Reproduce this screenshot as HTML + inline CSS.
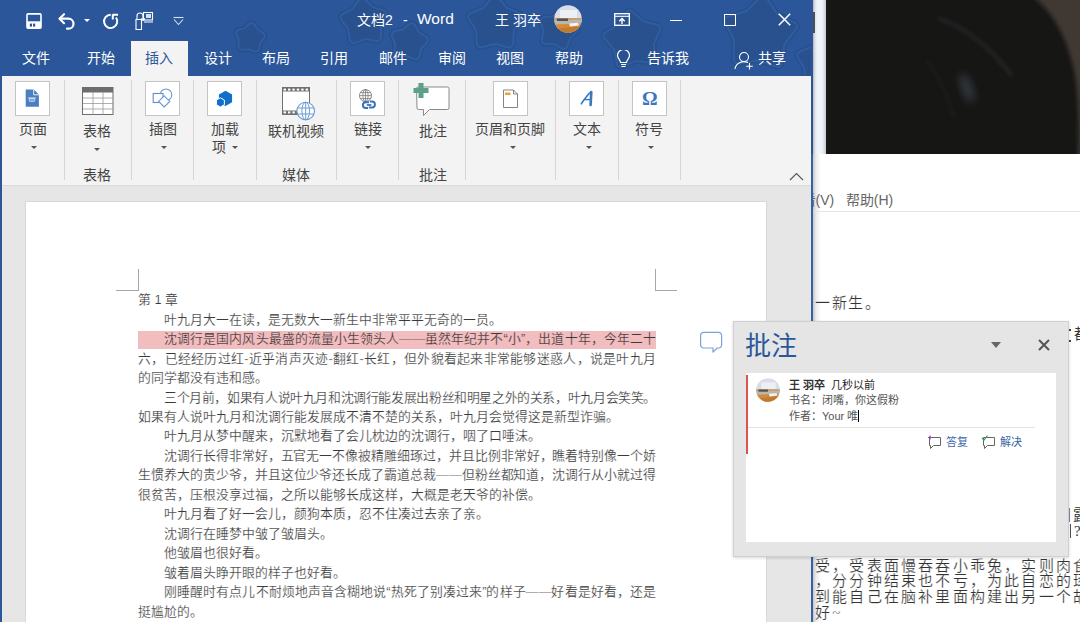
<!DOCTYPE html>
<html lang="zh-CN"><head><meta charset="utf-8">
<style>
*{margin:0;padding:0;box-sizing:border-box}
html,body{width:1080px;height:622px;overflow:hidden;background:#fff;font-family:"Liberation Sans",sans-serif}
.a{position:absolute}
#title{left:0;top:0;width:812px;height:76px;background:#2b579a}
.tt{color:#fff;font-size:14px;line-height:18px;white-space:nowrap}
.tab{color:#fff;font-size:14px;line-height:18px;white-space:nowrap;top:49px}
#ribbon{left:2px;top:76px;width:809px;height:110px;background:#f3f3f3;border-bottom:1px solid #dadada}
.sep{width:1px;background:#d6d6d6;top:80px;height:100px}
.box{width:35px;height:35px;background:#fff;border:1px solid #c4c4c4;top:81px}
.lbl{color:#444;font-size:14px;line-height:16px;white-space:nowrap;text-align:center}
.dd{width:0;height:0;border-left:3px solid transparent;border-right:3px solid transparent;border-top:3px solid #555}
#docbg{left:2px;top:186px;width:809px;height:437px;background:#e6e6e6}
#page{left:26px;top:202px;width:740px;height:430px;background:#fff;box-shadow:0 0 0 1px #d8d8d8}
.ln{position:absolute;left:138px;width:518px;font-size:12.85px;line-height:19.5px;height:19.5px;color:#3a3a3a;white-space:nowrap}
.j{text-align:justify;text-align-last:justify}
.ln{-webkit-text-stroke:0.18px #fff}
.ind{padding-left:26px}
</style></head><body>
<!-- title bar -->
<div id="title" class="a"></div>
<svg class="a" style="left:0;top:0" width="812" height="76" viewBox="0 0 812 76">
 <g fill="#284f8c" stroke="#284f8c" stroke-width="13" stroke-linejoin="round"><path d="M251.5 27.1 L255.0 32.8 L260.8 36.1 L256.5 41.2 L255.2 47.7 L249.0 45.2 L242.4 45.9 L242.9 39.3 L240.1 33.2 L246.6 31.6Z"/><path d="M362.3 2.1 L370.8 10.7 L382.4 14.2 L376.9 25.0 L377.1 37.1 L365.2 35.1 L353.7 39.1 L351.8 27.2 L344.5 17.5 L355.3 12.0Z"/><path d="M411.6 27.2 L416.1 35.1 L423.9 39.9 L417.7 46.6 L415.6 55.5 L407.3 51.7 L398.2 52.4 L399.2 43.4 L395.8 35.0 L404.7 33.1Z"/><path d="M495.0 0.0 L504.3 11.2 L517.8 16.6 L510.1 28.9 L509.1 43.4 L495.0 39.8 L480.9 43.4 L479.9 28.9 L472.2 16.6 L485.7 11.2Z"/><path d="M562.1 14.5 L566.2 23.4 L574.0 29.2 L566.9 35.8 L563.7 44.9 L555.3 40.2 L545.6 40.1 L547.5 30.6 L544.6 21.3 L554.2 20.1Z"/><path d="M629.4 14.3 L641.1 24.8 L656.4 28.6 L649.9 43.0 L651.1 58.7 L635.4 57.0 L620.8 63.0 L617.6 47.5 L607.4 35.5 L621.1 27.7Z"/><path d="M763.0 0.1 L774.7 17.1 L793.1 26.4 L780.7 42.8 L777.5 63.1 L758.0 56.4 L737.7 59.7 L738.1 39.0 L728.7 20.7 L748.4 14.8Z"/><path d="M822.0 40.0 L830.5 50.3 L842.9 55.2 L835.8 66.5 L834.9 79.8 L822.0 76.5 L809.1 79.8 L808.2 66.5 L801.1 55.2 L813.5 50.3Z"/></g>
 <g fill="#2f5da2" stroke="#2f5da2" stroke-width="10" stroke-linejoin="round"><path d="M251.5 27.1 L255.0 32.8 L260.8 36.1 L256.5 41.2 L255.2 47.7 L249.0 45.2 L242.4 45.9 L242.9 39.3 L240.1 33.2 L246.6 31.6Z"/><path d="M362.3 2.1 L370.8 10.7 L382.4 14.2 L376.9 25.0 L377.1 37.1 L365.2 35.1 L353.7 39.1 L351.8 27.2 L344.5 17.5 L355.3 12.0Z"/><path d="M411.6 27.2 L416.1 35.1 L423.9 39.9 L417.7 46.6 L415.6 55.5 L407.3 51.7 L398.2 52.4 L399.2 43.4 L395.8 35.0 L404.7 33.1Z"/><path d="M495.0 0.0 L504.3 11.2 L517.8 16.6 L510.1 28.9 L509.1 43.4 L495.0 39.8 L480.9 43.4 L479.9 28.9 L472.2 16.6 L485.7 11.2Z"/><path d="M562.1 14.5 L566.2 23.4 L574.0 29.2 L566.9 35.8 L563.7 44.9 L555.3 40.2 L545.6 40.1 L547.5 30.6 L544.6 21.3 L554.2 20.1Z"/><path d="M629.4 14.3 L641.1 24.8 L656.4 28.6 L649.9 43.0 L651.1 58.7 L635.4 57.0 L620.8 63.0 L617.6 47.5 L607.4 35.5 L621.1 27.7Z"/><path d="M763.0 0.1 L774.7 17.1 L793.1 26.4 L780.7 42.8 L777.5 63.1 L758.0 56.4 L737.7 59.7 L738.1 39.0 L728.7 20.7 L748.4 14.8Z"/><path d="M822.0 40.0 L830.5 50.3 L842.9 55.2 L835.8 66.5 L834.9 79.8 L822.0 76.5 L809.1 79.8 L808.2 66.5 L801.1 55.2 L813.5 50.3Z"/></g>
 <g fill="#29518e" stroke="#29518e" stroke-width="6" stroke-linejoin="round"><path d="M251.5 27.1 L255.0 32.8 L260.8 36.1 L256.5 41.2 L255.2 47.7 L249.0 45.2 L242.4 45.9 L242.9 39.3 L240.1 33.2 L246.6 31.6Z"/><path d="M362.3 2.1 L370.8 10.7 L382.4 14.2 L376.9 25.0 L377.1 37.1 L365.2 35.1 L353.7 39.1 L351.8 27.2 L344.5 17.5 L355.3 12.0Z"/><path d="M411.6 27.2 L416.1 35.1 L423.9 39.9 L417.7 46.6 L415.6 55.5 L407.3 51.7 L398.2 52.4 L399.2 43.4 L395.8 35.0 L404.7 33.1Z"/><path d="M495.0 0.0 L504.3 11.2 L517.8 16.6 L510.1 28.9 L509.1 43.4 L495.0 39.8 L480.9 43.4 L479.9 28.9 L472.2 16.6 L485.7 11.2Z"/><path d="M562.1 14.5 L566.2 23.4 L574.0 29.2 L566.9 35.8 L563.7 44.9 L555.3 40.2 L545.6 40.1 L547.5 30.6 L544.6 21.3 L554.2 20.1Z"/><path d="M629.4 14.3 L641.1 24.8 L656.4 28.6 L649.9 43.0 L651.1 58.7 L635.4 57.0 L620.8 63.0 L617.6 47.5 L607.4 35.5 L621.1 27.7Z"/><path d="M763.0 0.1 L774.7 17.1 L793.1 26.4 L780.7 42.8 L777.5 63.1 L758.0 56.4 L737.7 59.7 L738.1 39.0 L728.7 20.7 L748.4 14.8Z"/><path d="M822.0 40.0 L830.5 50.3 L842.9 55.2 L835.8 66.5 L834.9 79.8 L822.0 76.5 L809.1 79.8 L808.2 66.5 L801.1 55.2 L813.5 50.3Z"/></g>
</svg>
<div class="a" style="left:0;top:0;width:2px;height:622px;background:#2b579a"></div>
<div class="a" style="left:811px;top:0;width:2px;height:622px;background:#2b579a"></div>
<div class="a tt" style="left:357px;top:11px">文档2</div><div class="a tt" style="left:403px;top:11px">-</div><div class="a tt" style="left:417px;top:10px;font-size:15.5px">Word</div>
<div class="a tt" style="left:495px;top:11px">王 羽卒</div>
<svg class="a" style="left:554px;top:5px" width="28" height="28" viewBox="0 0 28 28">
 <defs><clipPath id="av"><circle cx="14" cy="14" r="13.8"/></clipPath></defs>
 <g clip-path="url(#av)">
  <rect width="28" height="28" fill="#d9dee6"/>
  <rect x="6" y="5" width="17" height="8" fill="#eceff3"/>
  <rect x="0" y="13" width="28" height="3" fill="#c99a6a"/>
  <path d="M0 15.5L28 14.5V20H0z" fill="#b9b6b2"/>
  <rect x="3" y="13.5" width="11" height="2.5" fill="#55524f"/>
  <path d="M0 19.5L28 18.5V28H0z" fill="#d48b38"/>
  <path d="M0 24L28 21V28H0z" fill="#c27a32"/>
  <path d="M15 18.5L24 17.8L25 20.5L16 21.5z" fill="#f4f4f4"/>
 </g>
</svg>


<!-- QAT -->
<svg class="a" style="left:25px;top:12px" width="18" height="18" viewBox="0 0 18 18">
 <rect x="2" y="1.9" width="14" height="14.3" rx="1" fill="none" stroke="#fff" stroke-width="1.6"/>
 <rect x="2" y="9.3" width="14" height="6.9" fill="#fff"/>
 <rect x="4.8" y="11.6" width="2.2" height="3" fill="#2b579a"/>
 <rect x="8" y="11.6" width="2.2" height="3" fill="#2b579a"/>
</svg>
<svg class="a" style="left:57px;top:12px" width="20" height="18" viewBox="0 0 20 18">
 <path d="M3 6.7h8.5a5 5 0 0 1 0 10h-1.5" fill="none" stroke="#fff" stroke-width="2.2" stroke-linecap="round"/>
 <path d="M7 2.2L2.5 6.7 7 11.2" fill="none" stroke="#fff" stroke-width="2.2" stroke-linecap="round" stroke-linejoin="round"/>
</svg>
<div class="a" style="left:84px;top:19px;width:0;height:0;border-left:3px solid transparent;border-right:3px solid transparent;border-top:3px solid #fff"></div>
<svg class="a" style="left:102px;top:12px" width="18" height="18" viewBox="0 0 18 18">
 <path d="M8.7 2.8A6.6 6.6 0 1 0 14 5.5" fill="none" stroke="#fff" stroke-width="2"/>
 <path d="M10.5 2.7h5.5M10.8 2.5v5" fill="none" stroke="#fff" stroke-width="2"/>
</svg>
<svg class="a" style="left:134px;top:11px" width="20" height="20" viewBox="0 0 20 20">
 <path d="M2 18.5V8.5h5.5v10z" fill="none" stroke="#fff" stroke-width="1.1"/>
 <path d="M3 8V5a3 3 0 0 1 6 0" fill="none" stroke="#fff" stroke-width="1.1"/>
 <path d="M9 9.5l-2-2M9 9.5l2-2M9 9.5V5" fill="none" stroke="#fff" stroke-width="1.2"/>
 <rect x="9.5" y="1.5" width="9" height="7.5" fill="none" stroke="#fff" stroke-width="1.1"/>
 <rect x="12" y="3" width="5" height="4" fill="#d8e2f0"/>
 <path d="M10 11h9" stroke="#fff" stroke-width="1"/>
</svg>
<svg class="a" style="left:173px;top:16px" width="11" height="10" viewBox="0 0 11 10"><path d="M0.5 1.5h10" stroke="#d5dfee" stroke-width="1.1"/><path d="M1 3.5l4.5 5 4.5-5" fill="none" stroke="#d5dfee" stroke-width="1.1"/></svg>

<!-- window controls -->
<svg class="a" style="left:614px;top:13px" width="16" height="13" viewBox="0 0 16 13">
 <rect x="0.7" y="0.7" width="14.6" height="11.6" fill="none" stroke="#fff" stroke-width="1.3"/>
 <path d="M0.7 3.3h14.6" stroke="#fff" stroke-width="1.1"/>
 <path d="M8 11V5.5M5.3 8.2L8 5.5l2.7 2.7" fill="none" stroke="#fff" stroke-width="1.4"/>
</svg>
<div class="a" style="left:670px;top:19.5px;width:12px;height:1.4px;background:#fff"></div>
<div class="a" style="left:724px;top:14px;width:12px;height:12px;border:1.2px solid #fff"></div>
<svg class="a" style="left:778px;top:13px" width="13" height="13" viewBox="0 0 13 13"><path d="M0.8 0.8l11.4 11.4M12.2 0.8L0.8 12.2" stroke="#fff" stroke-width="1.5"/></svg>
<svg class="a" style="left:616px;top:50px" width="15" height="18" viewBox="0 0 15 18">
 <path d="M4.5 12.5c0-2.5-3-4-3-7a6 6 0 0 1 12 0c0 3-3 4.5-3 7z" fill="none" stroke="#fff" stroke-width="1.2"/>
 <path d="M5 14.5h5M5.5 16.5h4" stroke="#fff" stroke-width="1.1"/>
</svg>
<svg class="a" style="left:734px;top:51px" width="20" height="19" viewBox="0 0 20 19">
 <circle cx="10" cy="6" r="4.5" fill="none" stroke="#fff" stroke-width="1.1"/>
 <path d="M1 18a9 8 0 0 1 13-6.5" fill="none" stroke="#fff" stroke-width="1.1"/>
 <path d="M15.5 12v6.5M12.2 15.2h6.6" stroke="#fff" stroke-width="1.1"/>
</svg>

<!-- tabs -->
<div class="a" style="left:131px;top:41px;width:57px;height:36px;background:#f3f3f3"></div>
<div class="a tab" style="left:22px">文件</div>
<div class="a tab" style="left:87px">开始</div>
<div class="a tab" style="left:145px;color:#2b579a">插入</div>
<div class="a tab" style="left:204px">设计</div>
<div class="a tab" style="left:262px">布局</div>
<div class="a tab" style="left:320px">引用</div>
<div class="a tab" style="left:379px">邮件</div>
<div class="a tab" style="left:438px">审阅</div>
<div class="a tab" style="left:496px">视图</div>
<div class="a tab" style="left:555px">帮助</div>
<div class="a tab" style="left:647px">告诉我</div>
<div class="a tab" style="left:758px">共享</div>

<!-- ribbon -->
<div id="ribbon" class="a"></div>


<!-- ribbon content -->
<div class="a sep" style="left:64px"></div>
<div class="a sep" style="left:131px"></div>
<div class="a sep" style="left:193px"></div>
<div class="a sep" style="left:256px"></div>
<div class="a sep" style="left:336px"></div>
<div class="a sep" style="left:398px"></div>
<div class="a sep" style="left:465px"></div>
<div class="a sep" style="left:555px"></div>
<div class="a sep" style="left:618px"></div>
<div class="a sep" style="left:680px"></div>

<div class="a box" style="left:15px"></div>
<div class="a box" style="left:145px"></div>
<div class="a box" style="left:207px"></div>
<div class="a box" style="left:350px"></div>
<div class="a box" style="left:493px"></div>
<div class="a box" style="left:569px"></div>
<div class="a box" style="left:632px"></div>

<!-- icons -->
<svg class="a" style="left:15px;top:81px" width="35" height="35" viewBox="0 0 35 35">
 <path d="M10.7 8.6h8l5.2 5.2v12h-13.2z" fill="#4a80bf"/>
 <path d="M18.7 8.6v5.2h5.2" fill="none" stroke="#fff" stroke-width="0.9"/>
 <path d="M19.5 9.6v3.4h3.4z" fill="#4a80bf"/>
 <path d="M13.3 16.9h7.4" stroke="#dfe9f5" stroke-width="1"/>
 <path d="M14 17.6h6l-0.8 2.8h-4.4z" fill="none" stroke="#dfe9f5" stroke-width="0.8"/>
 <path d="M16 17.8v2.4M18 17.8v2.4" stroke="#dfe9f5" stroke-width="0.6"/>
</svg>
<svg class="a" style="left:82px;top:87px" width="32" height="28" viewBox="0 0 32 28">
 <rect x="0.5" y="0.5" width="30.5" height="27" fill="#fff" stroke="#6d6d6d"/>
 <rect x="0.5" y="0.5" width="30.5" height="5" fill="#6d6d6d"/>
 <path d="M11 5v22.5M21 5v22.5M1 11h30M1 16.5h30M1 22h30" stroke="#9a9a9a" stroke-width="0.8"/>
</svg>
<svg class="a" style="left:145px;top:81px" width="35" height="35" viewBox="0 0 35 35">
 <circle cx="21" cy="13.8" r="5.8" fill="none" stroke="#6d98cf" stroke-width="1.1"/>
 <rect x="8.2" y="12.5" width="9.8" height="9" fill="#fff" stroke="#5f8fca" stroke-width="1.1"/>
 <path d="M19.2 14.8l5.6 5.6-5.6 5.6-5.6-5.6z" fill="#fff" stroke="#6d98cf" stroke-width="1.1"/>
</svg>
<svg class="a" style="left:207px;top:81px" width="35" height="35" viewBox="0 0 35 35">
 <path d="M18.50 9.80 L25.08 13.60 L25.08 21.20 L18.50 25.00 L11.92 21.20 L11.92 13.60Z" fill="#1070c8"/>
 <path d="M13.40 16.80 L17.38 19.10 L17.38 23.70 L13.40 26.00 L9.42 23.70 L9.42 19.10Z" fill="#1070c8" stroke="#fff" stroke-width="1"/>
</svg>
<svg class="a" style="left:281px;top:86px" width="36" height="36" viewBox="0 0 36 36">
 <rect x="1.5" y="1.5" width="27" height="27" fill="#fff" stroke="#707070" stroke-width="1"/>
 <rect x="1.5" y="1.5" width="27" height="4" fill="#707070"/>
 <rect x="1.5" y="24.5" width="27" height="4" fill="#707070"/>
 <rect x="2.6" y="2.6" width="2.4" height="2" fill="#fff"/><rect x="7.0" y="2.6" width="2.4" height="2" fill="#fff"/><rect x="11.4" y="2.6" width="2.4" height="2" fill="#fff"/><rect x="15.8" y="2.6" width="2.4" height="2" fill="#fff"/><rect x="20.2" y="2.6" width="2.4" height="2" fill="#fff"/><rect x="24.6" y="2.6" width="2.4" height="2" fill="#fff"/><rect x="2.6" y="25.4" width="2.4" height="2" fill="#fff"/><rect x="7.0" y="25.4" width="2.4" height="2" fill="#fff"/><rect x="11.4" y="25.4" width="2.4" height="2" fill="#fff"/>
 <circle cx="24.7" cy="25" r="8.8" fill="#fff" stroke="#6b9bd3" stroke-width="1.1"/>
 <ellipse cx="24.7" cy="25" rx="3.8" ry="8.8" fill="none" stroke="#6b9bd3" stroke-width="1"/>
 <path d="M24.7 16.2v17.6M16.5 22h16.4M16.5 28h16.4" stroke="#6b9bd3" stroke-width="1"/>
</svg>
<svg class="a" style="left:350px;top:81px" width="35" height="35" viewBox="0 0 35 35">
 <circle cx="15.5" cy="14.6" r="6" fill="#fff" stroke="#7a7a7a" stroke-width="0.9"/>
 <ellipse cx="15.5" cy="14.6" rx="2.6" ry="6" fill="none" stroke="#7a7a7a" stroke-width="0.8"/>
 <path d="M9.5 14.6h12M10.3 11.6h10.4M10.3 17.6h10.4M15.5 8.6v12" stroke="#7a7a7a" stroke-width="0.8"/>
 <path d="M19 21.2h-3.2a2.9 2.9 0 0 0 0 5.8h2.2" fill="none" stroke="#3a73b8" stroke-width="2"/>
 <path d="M18.8 26.4h3.2a2.9 2.9 0 0 0 0-5.8h-2.2" fill="none" stroke="#3a73b8" stroke-width="2"/>
 <path d="M16.8 24h4.6" stroke="#3a73b8" stroke-width="1.8"/>
</svg>
<svg class="a" style="left:412px;top:82px" width="40" height="36" viewBox="0 0 40 36">
 <path d="M4.5 6.5a1.5 1.5 0 0 1 1.5-1.5h29.5a1.5 1.5 0 0 1 1.5 1.5v19.5a1.5 1.5 0 0 1-1.5 1.5h-18l-6 6v-6h-5a1.5 1.5 0 0 1-1.5-1.5z" fill="#fff" stroke="#8a8a8a" stroke-width="1"/>
 <path d="M6.5 1h5v5h5v5h-5v5h-5v-5h-5v-5h5z" fill="#5aa08a"/>
</svg>
<svg class="a" style="left:493px;top:81px" width="35" height="34" viewBox="0 0 35 34">
 <path d="M10.5 9h10l4 4v13.5h-14z" fill="#fff" stroke="#777" stroke-width="0.9"/>
 <path d="M20.5 9v4h4" fill="none" stroke="#777" stroke-width="0.9"/>
 <rect x="12" y="11.5" width="5.5" height="2.5" fill="#e8a33d"/>
</svg>
<svg class="a" style="left:569px;top:81px" width="35" height="35" viewBox="0 0 35 35">
 <path d="M22.3 11L21.6 24" stroke="#3d78bf" stroke-width="2.6" stroke-linecap="round"/>
 <path d="M22 10.8C18 14 15 19 12.3 22.8" fill="none" stroke="#3d78bf" stroke-width="1.6" stroke-linecap="round"/>
 <path d="M15.8 18.6h5.8" stroke="#3d78bf" stroke-width="1.4"/>
</svg>
<svg class="a" style="left:632px;top:81px" width="35" height="34" viewBox="0 0 35 34">
 <text x="17.8" y="24.3" text-anchor="middle" font-family="Liberation Serif" font-weight="bold" font-size="19.5" fill="#3b77c0">Ω</text>
</svg>

<!-- labels -->
<div class="a lbl" style="left:12px;top:121px;width:41px">页面</div>
<div class="a lbl" style="left:74px;top:123px;width:46px">表格</div>
<div class="a lbl" style="left:140px;top:121px;width:45px">插图</div>
<div class="a lbl" style="left:204px;top:121px;width:41px">加载</div>
<div class="a lbl" style="left:204px;top:139px;width:30px">项</div>
<div class="a lbl" style="left:262px;top:123px;width:68px">联机视频</div>
<div class="a lbl" style="left:340px;top:121px;width:55px">链接</div>
<div class="a lbl" style="left:410px;top:123px;width:45px">批注</div>
<div class="a lbl" style="left:470px;top:121px;width:80px">页眉和页脚</div>
<div class="a lbl" style="left:560px;top:121px;width:53px">文本</div>
<div class="a lbl" style="left:622px;top:121px;width:54px">符号</div>
<div class="a lbl" style="left:74px;top:167px;width:46px">表格</div>
<div class="a lbl" style="left:262px;top:167px;width:68px">媒体</div>
<div class="a lbl" style="left:410px;top:167px;width:45px">批注</div>

<div class="a dd" style="left:31px;top:146px"></div>
<div class="a dd" style="left:94px;top:148px"></div>
<div class="a dd" style="left:161px;top:146px"></div>
<div class="a dd" style="left:232px;top:146px"></div>
<div class="a dd" style="left:365px;top:146px"></div>
<div class="a dd" style="left:510px;top:146px"></div>
<div class="a dd" style="left:586px;top:146px"></div>
<div class="a dd" style="left:648px;top:146px"></div>
<svg class="a" style="left:789px;top:172px" width="15" height="9" viewBox="0 0 15 9"><path d="M1 8l6.5-6.5L14 8" fill="none" stroke="#555" stroke-width="1.1"/></svg>

<!-- document -->
<div id="docbg" class="a"></div>
<div id="page" class="a"></div>


<!-- crop marks -->
<div class="a" style="left:116px;top:290px;width:22px;height:1px;background:#a8a8a8"></div>
<div class="a" style="left:138px;top:269px;width:1px;height:22px;background:#a8a8a8"></div>
<div class="a" style="left:655px;top:269px;width:1px;height:22px;background:#a8a8a8"></div>
<div class="a" style="left:655px;top:290px;width:22px;height:1px;background:#a8a8a8"></div>
<!-- comment marker -->
<svg class="a" style="left:699px;top:331px" width="25" height="23" viewBox="0 0 25 23">
 <path d="M4.6 1.4h15a3 3 0 0 1 3 3v9.6a3 3 0 0 1-3 3h-1.4l-4.2 4.2v-4.2h-9.4a3 3 0 0 1-3-3v-9.6a3 3 0 0 1 3-3z" fill="#fff" stroke="#7ba3d8" stroke-width="1.2" stroke-linejoin="round"/>
</svg>

<!-- doc text -->
<div class="a" style="left:138px;top:331px;width:518px;height:17.8px;background:#f2bdbf"></div>
<div class="ln " style="top:290.05px">第 1 章</div>
<div class="ln ind" style="top:309.54px">叶九月大一在读，是无数大一新生中非常平平无奇的一员。</div>
<div class="ln ind j" style="-webkit-text-stroke:0.18px #f2bdbf;top:329.03px">沈调行是国内风头最盛的流量小生领头人——虽然年纪并不“小”，出道十年，今年二十</div>
<div class="ln j" style="top:348.52px">六，已经经历过红-近乎消声灭迹-翻红-长红，但外貌看起来非常能够迷惑人，说是叶九月</div>
<div class="ln " style="top:368.01px">的同学都没有违和感。</div>
<div class="ln ind j" style="top:387.50px;letter-spacing:-0.4px">三个月前，如果有人说叶九月和沈调行能发展出粉丝和明星之外的关系，叶九月会笑笑。</div>
<div class="ln " style="top:406.99px">如果有人说叶九月和沈调行能发展成不清不楚的关系，叶九月会觉得这是新型诈骗。</div>
<div class="ln ind" style="top:426.48px">叶九月从梦中醒来，沉默地看了会儿枕边的沈调行，咽了口唾沫。</div>
<div class="ln ind j" style="top:445.97px;letter-spacing:-0.1px">沈调行长得非常好，五官无一不像被精雕细琢过，并且比例非常好，瞧着特别像一个娇</div>
<div class="ln j" style="top:465.46px;letter-spacing:-0.1px">生惯养大的贵少爷，并且这位少爷还长成了霸道总裁——但粉丝都知道，沈调行从小就过得</div>
<div class="ln " style="top:484.95px">很贫苦，压根没享过福，之所以能够长成这样，大概是老天爷的补偿。</div>
<div class="ln ind" style="top:504.44px">叶九月看了好一会儿，颜狗本质，忍不住凑过去亲了亲。</div>
<div class="ln ind" style="top:523.93px">沈调行在睡梦中皱了皱眉头。</div>
<div class="ln ind" style="top:543.42px">他皱眉也很好看。</div>
<div class="ln ind" style="top:562.91px">皱着眉头睁开眼的样子也好看。</div>
<div class="ln ind j" style="top:582.40px">刚睡醒时有点儿不耐烦地声音含糊地说“热死了别凑过来”的样子——好看是好看，还是</div>
<div class="ln " style="top:601.89px">挺尴尬的。</div>

<!-- right side -->
<div class="a" style="left:813px;top:0;width:13px;height:154px;background:linear-gradient(90deg,#b4b6b9 0,#dfe3e8 2px,#eef3fa 4px,#f0f4fa 9px,#c8ccd2 13px)"></div>
<div class="a" style="left:813px;top:12px;width:2px;height:21px;background:#4a4f58"></div>
<svg class="a" style="left:826px;top:0" width="254" height="154" viewBox="0 0 254 154">
 <defs>
  <filter id="bl" x="-20%" y="-20%" width="140%" height="140%"><feGaussianBlur stdDeviation="2"/></filter>
  <filter id="bl3" x="-50%" y="-50%" width="200%" height="200%"><feGaussianBlur stdDeviation="4"/></filter>
 </defs>
 <rect width="254" height="154" fill="#161615"/>
 <path d="M205 -5C228 12 242 40 249 75C253 105 253 130 252 160H262V-5z" fill="#3f3731" filter="url(#bl)"/>
 <path d="M112 18C140 28 165 48 186 76" stroke="#50555b" stroke-width="1.6" opacity="0.55" fill="none" filter="url(#bl)"/>
 <path d="M100 60C112 75 122 95 128 118" stroke="#3a3e44" stroke-width="1.2" opacity="0.5" fill="none" filter="url(#bl)"/>
 <ellipse cx="141" cy="88" rx="5" ry="15" transform="rotate(-20 141 88)" fill="#5d6878" opacity="0.45" filter="url(#bl3)"/>
 
</svg>


<!-- right side window text -->
<div class="a" style="left:813px;top:154px;width:267px;height:468px;background:#fff"></div>
<div class="a" style="left:813px;top:154px;width:8px;height:468px;background:linear-gradient(90deg,rgba(0,0,0,.22),rgba(0,0,0,.08) 3px,rgba(0,0,0,0))"></div>
<div class="a" style="left:811px;top:154px;width:2px;height:468px;background:#3561a6"></div>
<div class="a" style="left:813px;top:190px;width:267px;height:20px;overflow:hidden"><div class="a" style="left:-11.5px;top:2px;font-size:14px;line-height:16px;color:#666;white-space:nowrap">看(V) &nbsp;&nbsp;帮助(H)</div></div>
<div class="a" style="left:813px;top:211px;width:267px;height:1px;background:#e4e4e4"></div>
<div class="a" style="left:815px;top:294px;font-size:15px;line-height:18px;color:#333;white-space:nowrap;letter-spacing:1.5px;-webkit-text-stroke:0.2px #fff;font-family:'Liberation Serif',serif">一新生。</div>
<div class="a" style="left:1069px;top:329px;width:2px;height:2px;background:#444"></div><div class="a" style="left:1069px;top:340px;width:2px;height:2px;background:#444"></div>
<div class="a" style="left:1074px;top:325px;font-size:15px;line-height:18px;color:#333;white-space:nowrap;font-family:'Liberation Serif',serif">都</div>
<div class="a" style="left:1073px;top:506px;font-size:15px;line-height:18px;color:#333;white-space:nowrap;font-family:'Liberation Serif',serif">露</div>
<div class="a" style="left:1074px;top:522px;font-size:15px;line-height:18px;color:#333;white-space:nowrap;font-family:'Liberation Serif',serif">?</div>
<div class="a" style="left:1069px;top:508px;width:1px;height:14px;background:#7a8aa8"></div><div class="a" style="left:1070px;top:524px;width:1px;height:14px;background:#555"></div>
<div class="a" style="left:815px;top:558.5px;font-size:15px;line-height:15.8px;color:#333;white-space:nowrap;letter-spacing:2.2px;-webkit-text-stroke:0.2px #fff;font-family:'Liberation Serif',serif">受，受表面慢吞吞小乖兔，实则肉食<br>，分分钟结束也不亏，为此自恋的琢<br>到能自己在脑补里面构建出另一个故<br>好~</div>

<!-- comment pane -->
<div class="a" style="left:733px;top:321px;width:336px;height:236px;background:#e5e5e5;border:1px solid #d0d0d0;box-shadow:0 1px 3px rgba(0,0,0,.16)"></div>
<div class="a" style="left:745px;top:331px;font-size:26px;line-height:30px;color:#2b579a;white-space:nowrap">批注</div>
<div class="a" style="left:991px;top:342px;width:0;height:0;border-left:5px solid transparent;border-right:5px solid transparent;border-top:6px solid #666"></div>
<svg class="a" style="left:1038px;top:339px" width="12" height="12" viewBox="0 0 12 12"><path d="M1 1l10 10M11 1L1 11" stroke="#555" stroke-width="2"/></svg>
<div class="a" style="left:746px;top:373px;width:310px;height:169px;background:#fff"></div>
<div class="a" style="left:746px;top:375px;width:2px;height:79px;background:#d9534f"></div>
<svg class="a" style="left:756px;top:378px" width="24" height="24" viewBox="0 0 28 28">
 <g clip-path="url(#av)">
  <rect width="28" height="28" fill="#d9dee6"/>
  <rect x="6" y="5" width="17" height="8" fill="#eceff3"/>
  <rect x="0" y="13" width="28" height="3" fill="#c99a6a"/>
  <path d="M0 15.5L28 14.5V20H0z" fill="#b9b6b2"/>
  <rect x="3" y="13.5" width="11" height="2.5" fill="#55524f"/>
  <path d="M0 19.5L28 18.5V28H0z" fill="#d48b38"/>
  <path d="M0 24L28 21V28H0z" fill="#c27a32"/>
  <path d="M15 18.5L24 17.8L25 20.5L16 21.5z" fill="#f4f4f4"/>
 </g>
</svg>
<div class="a" style="left:789px;top:377.7px;font-size:11px;line-height:14px;color:#222;white-space:nowrap"><b style="color:#333">王 羽卒</b>&nbsp; 几秒以前</div>
<div class="a" style="left:789px;top:392.7px;font-size:11px;line-height:14px;color:#555;white-space:nowrap">书名：闭嘴，你这假粉</div>
<div class="a" style="left:789px;top:408.7px;font-size:11px;line-height:14px;color:#555;white-space:nowrap">作者：Your 唯<span style="display:inline-block;width:1px;height:12px;background:#000;vertical-align:-2px"></span></div>
<div class="a" style="left:748px;top:427px;width:287px;height:1px;background:#e2e2e2"></div>
<svg class="a" style="left:927px;top:435px" width="15" height="15" viewBox="0 0 15 15"><path d="M2.5 2.5h11v8h-7l-3 3v-3h-1z" fill="none" stroke="#666" stroke-width="1"/><path d="M3 0.5v4M1 2.5h4" stroke="#8e44ad" stroke-width="1.2"/></svg>
<div class="a" style="left:946px;top:435px;font-size:11px;line-height:15px;color:#3b66a8;white-space:nowrap">答复</div>
<svg class="a" style="left:981px;top:435px" width="15" height="15" viewBox="0 0 15 15"><path d="M2.5 2.5h11v8h-7l-3 3v-3h-1z" fill="none" stroke="#666" stroke-width="1"/><path d="M1 3l2 2 3.5-4.5" fill="none" stroke="#3a9a5a" stroke-width="1.2"/></svg>
<div class="a" style="left:1000px;top:435px;font-size:11px;line-height:15px;color:#3b66a8;white-space:nowrap">解决</div>

</body></html>
